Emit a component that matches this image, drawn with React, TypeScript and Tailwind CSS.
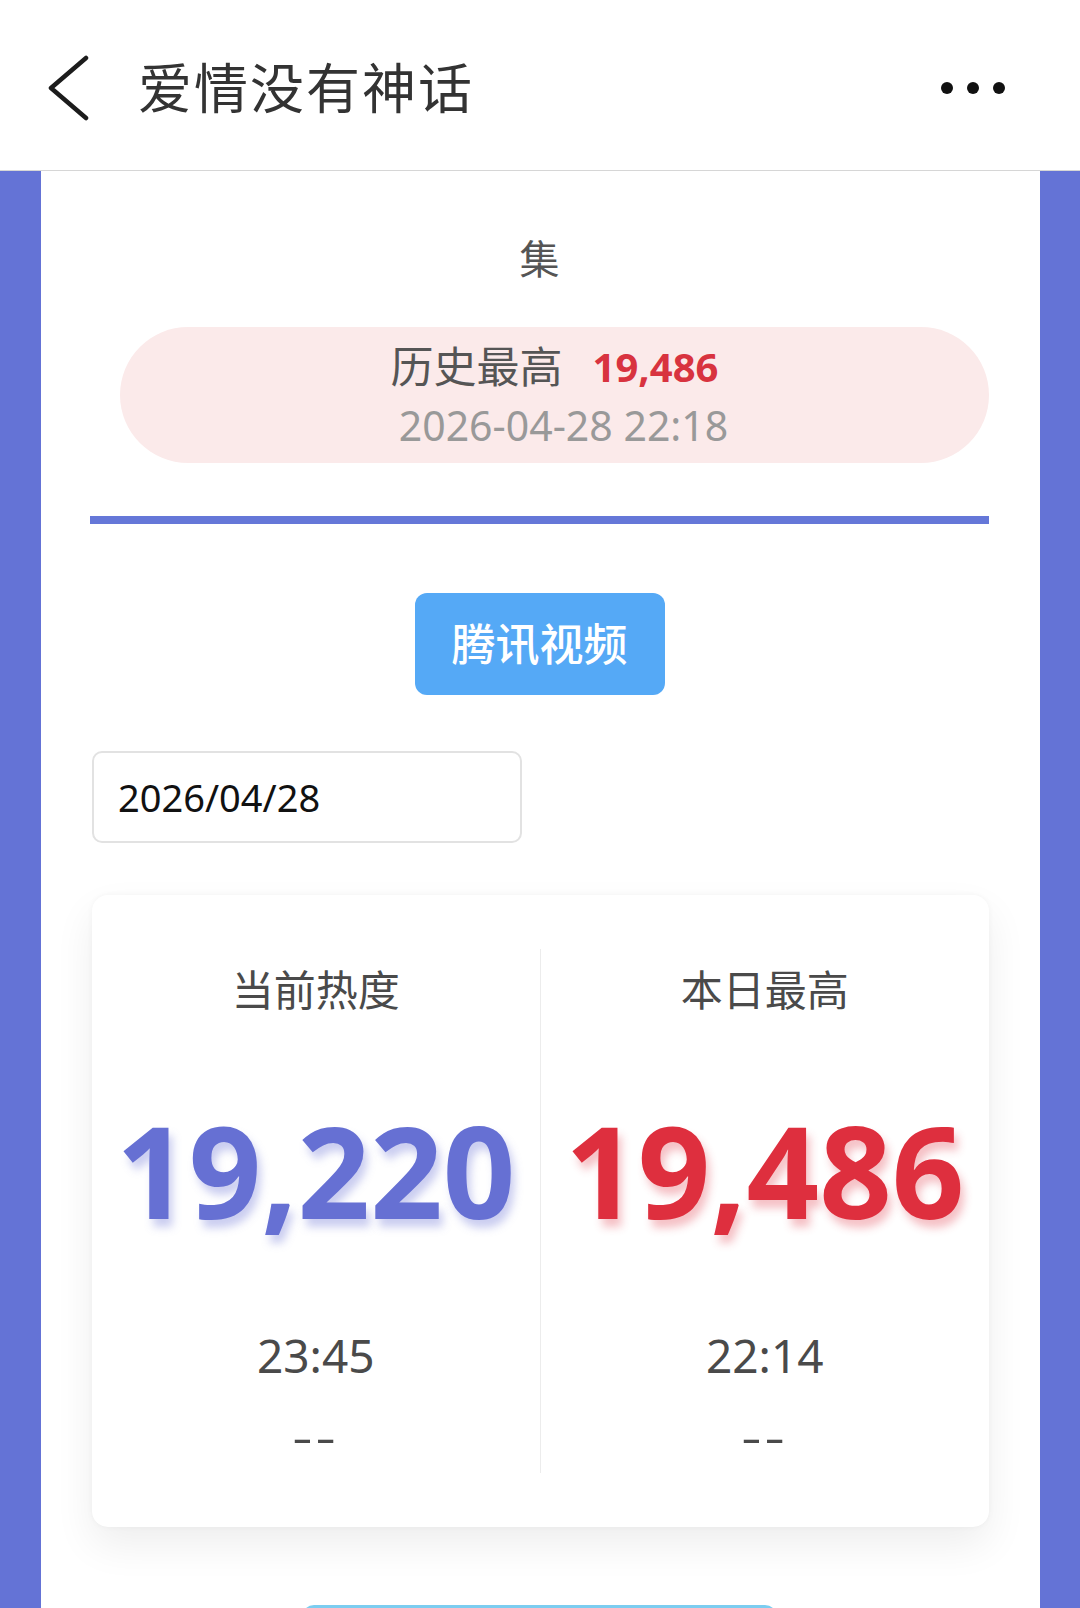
const font = "font-['Noto_Sans','Noto_Sans_CJK_SC',sans-serif]"

function StatColumn({
  label, value, time, color, shadow, divider,
}: { label: string; value: string; time: string; color: string; shadow: string; divider?: boolean }) {
  return (
    <div className={`flex flex-col items-center ${divider ? 'border-r border-[#ececec]' : ''}`}>
      <p className="mt-[12px] text-[42px] leading-[58px] text-[#4a4a4a]">{label}</p>
      <p className={`mt-[87px] text-[127px] font-bold leading-none ${color} ${shadow}`}>{value}</p>
      <p className="mt-[94px] text-[46px] leading-[56px] text-[#4a4a4a]">{time}</p>
      <p className="mt-[26px] mb-[8px] inline-block scale-x-150 text-[42px] leading-[56px] tracking-[2px] text-[#4a4a4a]">--</p>
    </div>
  )
}

export default function App() {
  return (
    <div className={`w-[1080px] h-[1608px] overflow-hidden bg-white flex flex-col ${font}`}>
      {/* Header */}
      <div className="h-[171px] shrink-0 flex items-center pt-[6px] border-b border-[#d6d6d6] bg-white">
        <svg className="ml-[47px]" width="42" height="66" viewBox="0 0 42 66" fill="none">
          <path d="M39 3 L4 33 L39 63" stroke="#1c1c1c" strokeWidth="4.5" strokeLinecap="round" strokeLinejoin="round" />
        </svg>
        <h1 className="ml-[49px] text-[54px] tracking-[2px] text-[#333]">爱情没有神话</h1>
        <div className="ml-auto mr-[75px] flex gap-[14px]">
          <span className="w-[12px] h-[12px] rounded-full bg-[#111]" />
          <span className="w-[12px] h-[12px] rounded-full bg-[#111]" />
          <span className="w-[12px] h-[12px] rounded-full bg-[#111]" />
        </div>
      </div>

      {/* Body */}
      <div className="flex flex-1">
        <div className="w-[41px] bg-[#6473d6]" />
        <div className="flex-1 bg-white pl-[49px] pr-[51px] flex flex-col">
          <p className="mt-[60px] text-center text-[40px] leading-[56px] text-[#555]">集</p>

          <div className="mt-[40px] ml-[30px] h-[136px] rounded-full bg-[#fbeaea] pt-[12px] flex flex-col items-center">
            <div className="h-[56px] flex items-center gap-[30px]">
              <span className="text-[43px] text-[#555]">历史最高</span>
              <span className="text-[40px] font-bold text-[#d8333f]">19,486</span>
            </div>
            <div className="h-[62px] flex items-center ml-[18px] text-[41px] text-[#999]">2026-04-28 22:18</div>
          </div>

          <div className="mt-[53px] h-[8px] bg-[#6577d8]" />

          <div className="mt-[69px] self-center w-[250px] h-[102px] rounded-[12px] bg-[#55a9f6] flex items-center justify-center">
            <span className="text-[44px] font-medium text-white">腾讯视频</span>
          </div>

          <div className="mt-[56px] ml-[2px] w-[430px] h-[92px] rounded-[10px] border-2 border-[#e2e2e2] flex items-center px-[24px]">
            <span className="text-[38px] text-[#111]">2026/04/28</span>
          </div>

          <div className="mt-[52px] ml-[2px] rounded-[16px] bg-white py-[54px] grid grid-cols-2 shadow-[0_18px_40px_rgba(0,0,0,0.07),0_0_6px_rgba(0,0,0,0.04)]">
            <StatColumn
              label="当前热度" value="19,220" time="23:45" divider
              color="text-[#6670d3]" shadow="[text-shadow:4px_8px_8px_rgba(102,112,211,0.35)]"
            />
            <StatColumn
              label="本日最高" value="19,486" time="22:14"
              color="text-[#de2f3e]" shadow="[text-shadow:4px_8px_8px_rgba(222,47,62,0.3)]"
            />
          </div>

          <div className="mt-[78px] self-center w-[475px] h-[100px] rounded-[12px] bg-[#7ccdf0]" />
        </div>
        <div className="w-[40px] bg-[#6473d6]" />
      </div>
    </div>
  )
}
